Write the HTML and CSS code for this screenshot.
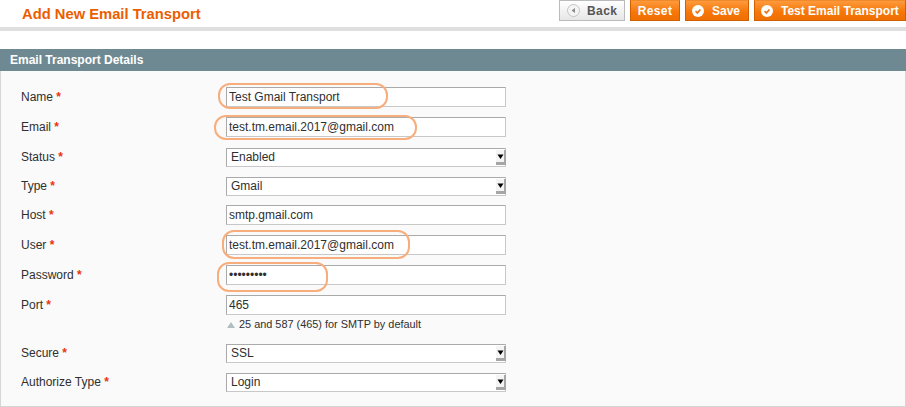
FILE: index.html
```html
<!DOCTYPE html>
<html lang="en">
<head>
  <meta charset="UTF-8" />
  <meta name="viewport" content="width=device-width, initial-scale=1.0"/>
  <title>Add New Email Transport</title>
  <link rel="stylesheet" href="styles.css">
</head>
<body>

  <div class="page-head">
    <h3>Add New Email Transport</h3>
    <div class="actions">
      <button class="btn btn-back">
        <svg class="icon" width="13" height="13" viewBox="0 0 13 13"><circle cx="6.5" cy="6.5" r="6" fill="#f4f4f4" stroke="#c4c4c4"/><path d="M8 4v5L4.6 6.5z" fill="#8a8a8a"/></svg>
        Back
      </button>
      <button class="btn btn-reset">Reset</button>
      <button class="btn btn-save">
        <svg class="icon" width="12" height="12" viewBox="0 0 12 12"><circle cx="6" cy="6" r="6" fill="#fff"/><path d="M3.6 6.2l1.8 1.8 3-3.5" fill="none" stroke="#e8781e" stroke-width="1.8"/></svg>
        Save
      </button>
      <button class="btn btn-test">
        <svg class="icon" width="12" height="12" viewBox="0 0 12 12"><circle cx="6" cy="6" r="6" fill="#fff"/><path d="M3.6 6.2l1.8 1.8 3-3.5" fill="none" stroke="#e8781e" stroke-width="1.8"/></svg>
        Test Email Transport
      </button>
    </div>
  </div>

  <div class="section-head">Email Transport Details</div>

  <div class="fieldset">
    <div class="row row-name">
      <label>Name <em>*</em></label>
      <div class="value">
        <input type="text" value="Test Gmail Transport">
        <span class="oval oval-name"></span>
      </div>
    </div>
    <div class="row row-email">
      <label>Email <em>*</em></label>
      <div class="value">
        <input type="text" value="test.tm.email.2017@gmail.com">
        <span class="oval oval-email"></span>
      </div>
    </div>
    <div class="row row-select">
      <label>Status <em>*</em></label>
      <div class="value">
        <select><option>Enabled</option></select>
        <svg class="arrow" width="10" height="15" viewBox="0 0 10 15"><path d="M0 0h8v12H0z" fill="#f4f4f4"/><path d="M8 0h2v15H0v-3h8z" fill="#a6a6a6"/><path d="M1.5 4.5h6L4.5 9z" fill="#000"/></svg>
      </div>
    </div>
    <div class="row row-select">
      <label>Type <em>*</em></label>
      <div class="value">
        <select><option>Gmail</option></select>
        <svg class="arrow" width="10" height="15" viewBox="0 0 10 15"><path d="M0 0h8v12H0z" fill="#f4f4f4"/><path d="M8 0h2v15H0v-3h8z" fill="#a6a6a6"/><path d="M1.5 4.5h6L4.5 9z" fill="#000"/></svg>
      </div>
    </div>
    <div class="row">
      <label>Host <em>*</em></label>
      <div class="value">
        <input type="text" value="smtp.gmail.com">
      </div>
    </div>
    <div class="row">
      <label>User <em>*</em></label>
      <div class="value">
        <input type="text" value="test.tm.email.2017@gmail.com">
        <span class="oval oval-user"></span>
      </div>
    </div>
    <div class="row">
      <label>Password <em>*</em></label>
      <div class="value">
        <input type="password" value="123456789">
        <span class="oval oval-pass"></span>
      </div>
    </div>
    <div class="row row-port">
      <label>Port <em>*</em></label>
      <div class="value">
        <input type="text" value="465">
        <p class="note">25 and 587 (465) for SMTP by default</p>
      </div>
    </div>
    <div class="row row-select">
      <label>Secure <em>*</em></label>
      <div class="value">
        <select><option>SSL</option></select>
        <svg class="arrow" width="10" height="15" viewBox="0 0 10 15"><path d="M0 0h8v12H0z" fill="#f4f4f4"/><path d="M8 0h2v15H0v-3h8z" fill="#a6a6a6"/><path d="M1.5 4.5h6L4.5 9z" fill="#000"/></svg>
      </div>
    </div>
    <div class="row row-select">
      <label>Authorize Type <em>*</em></label>
      <div class="value">
        <select><option>Login</option></select>
        <svg class="arrow" width="10" height="15" viewBox="0 0 10 15"><path d="M0 0h8v12H0z" fill="#f4f4f4"/><path d="M8 0h2v15H0v-3h8z" fill="#a6a6a6"/><path d="M1.5 4.5h6L4.5 9z" fill="#000"/></svg>
      </div>
    </div>
  </div>

</body>
</html>
```

FILE: styles.css
```css
* {
  box-sizing: border-box;
}

html, body {
  height: 407px;
  overflow: hidden;
}

body {
  margin: 0;
  background-color: #fff;
  font-family: "Liberation Sans", Arial, sans-serif;
  font-size: 12px;
  color: #2f2f2f;
}

.page-head {
  display: flex;
  justify-content: space-between;
  height: 31px;
  border-bottom: 4px solid #dfdfdf;
  padding-left: 22px;
}

.page-head h3 {
  margin: 6px 0 0;
  font-size: 14.75px;
  line-height: 17px;
  color: #eb5e00;
}

.actions {
  display: flex;
  gap: 5px;
}

.btn {
  display: flex;
  align-items: center;
  height: 21px;
  padding: 0;
  border: 1px solid #cf5f00;
  border-top-color: #f08a2a;
  font-family: inherit;
  font-size: 12px;
  font-weight: bold;
  color: #fff;
  background: linear-gradient(#fd9a3c, #f67607 60%, #ee6f03);
}

.btn-back {
  width: 66px;
  padding-left: 7px;
  gap: 7px;
  border-color: #bbb;
  letter-spacing: 0.4px;
  color: #555;
  background: linear-gradient(#fff, #e6e6e6);
}

.btn-reset {
  width: 50px;
  justify-content: center;
  letter-spacing: 0.4px;
}

.btn-save {
  width: 64px;
  padding-left: 6px;
  gap: 8px;
}

.btn-test {
  width: 152px;
  padding-left: 6px;
  gap: 8px;
}

.section-head {
  height: 22px;
  margin-top: 18px;
  padding-left: 10px;
  font-weight: bold;
  line-height: 22px;
  color: #fff;
  background-color: #6f8992;
}

.fieldset {
  height: 336px;
  padding-top: 16px;
  border: 1px solid #d6d6d6;
  border-top: none;
  background-color: #fafafa;
}

.row {
  display: flex;
  height: 30px;
  padding-left: 20px;
}

.row label {
  width: 205px;
  padding-top: 3px;
  line-height: 14px;
  color: #2f2f2f;
}

.row em {
  font-style: normal;
  font-weight: bold;
  color: #eb340a;
}

.row-select {
  height: 29px;
}

.row-port {
  height: 48px;
}

.value {
  position: relative;
  width: 280px;
}

.value input,
.value select {
  display: block;
  width: 280px;
  height: 20px;
  padding: 0 2px;
  border: 1px solid #aaa;
  border-bottom-color: #c8c8c8;
  border-right-color: #c8c8c8;
  border-radius: 0;
  outline: none;
  font-family: inherit;
  font-size: 12px;
  color: #2f2f2f;
  background-color: #fff;
}

.value select {
  height: 19px;
  padding: 0 0 1px 4px;
  margin-top: 1px;
  appearance: none;
}

.arrow {
  position: absolute;
  top: 3px;
  right: 0;
}

.note {
  margin: 3px 0 0 13px;
  font-size: 10.9px;
  line-height: 13px;
  position: relative;
}

.note::before {
  content: "";
  position: absolute;
  left: -12px;
  top: 4px;
  border: 4px solid transparent;
  border-top: none;
  border-bottom: 6px solid #b0bec4;
}

.oval {
  position: absolute;
  border: 2px solid #f7ad7c;
  border-radius: 12px;
  pointer-events: none;
}

.oval-name {
  left: -8px;
  top: -4px;
  width: 170px;
  height: 26px;
}

.oval-email {
  left: -12px;
  top: -2px;
  width: 203px;
  height: 25px;
}

.oval-user {
  left: -4px;
  top: -5px;
  width: 188px;
  height: 29px;
}

.oval-pass {
  left: -9px;
  top: -3px;
  width: 111px;
  height: 30px;
}
```
